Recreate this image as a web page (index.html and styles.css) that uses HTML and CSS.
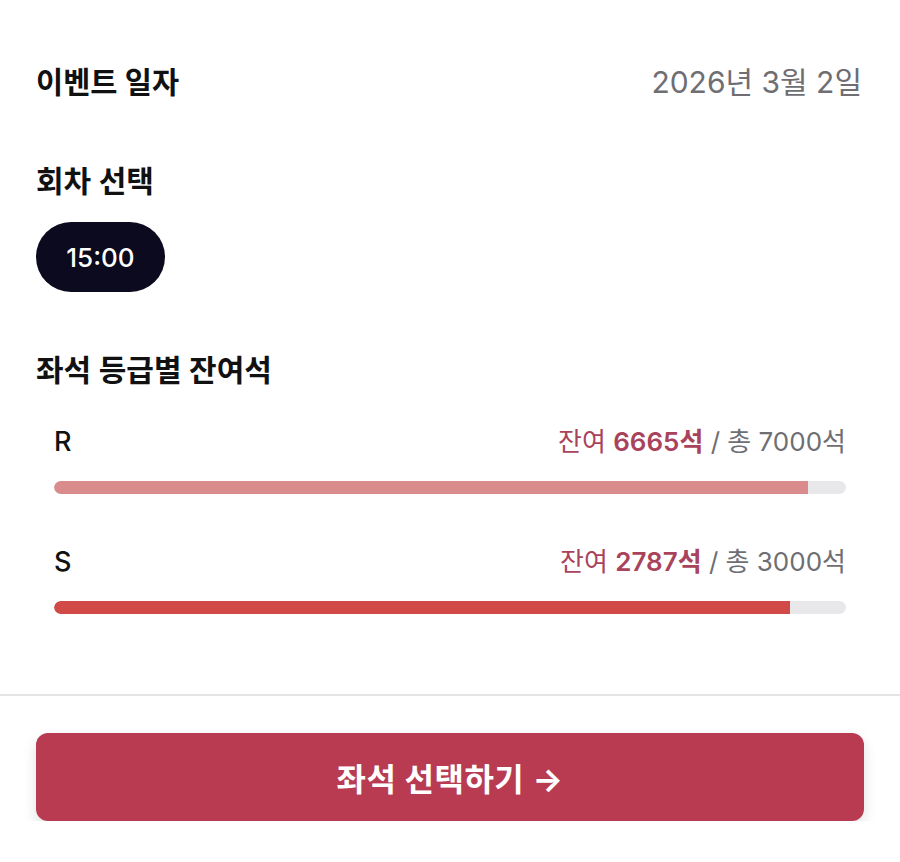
FILE: index.html
```html
<!DOCTYPE html>
<html lang="ko">
<head>
  <meta charset="UTF-8">
  <title>회차 선택</title>
  <link rel="stylesheet" href="styles.css">
</head>
<body>
  <div class="page">
    <div class="info-row">
      <span class="label">이벤트 일자</span>
      <span class="date">2026년 3월 2일</span>
    </div>

    <h3 class="section-title first">회차 선택</h3>
    <div class="rounds">
      <button class="round active">15:00</button>
    </div>

    <h3 class="section-title">좌석 등급별 잔여석</h3>
    <div class="grades">
      <div class="grade">
        <div class="grade-head">
          <span class="grade-name">R</span>
          <span class="grade-count"><span class="remain">잔여 <b>6665석</b></span> / 총 7000석</span>
        </div>
        <div class="bar"><div class="fill fill-r" style="width: 95.2%"></div></div>
      </div>
      <div class="grade">
        <div class="grade-head">
          <span class="grade-name">S</span>
          <span class="grade-count"><span class="remain">잔여 <b>2787석</b></span> / 총 3000석</span>
        </div>
        <div class="bar"><div class="fill fill-s" style="width: 92.9%"></div></div>
      </div>
    </div>
  </div>

  <div class="footer">
    <button class="cta">좌석 선택하기 <span class="arrow">→</span></button>
  </div>
</body>
</html>
```

FILE: styles.css
```css
body {
  margin: 0;
  background: #fff;
  color: #111;
  font-family: "Inter", "Noto Sans CJK KR", sans-serif;
}
.page {
  padding: 62px 36px 0;
  height: 694px;
  box-sizing: border-box;
}
.info-row {
  display: flex;
  justify-content: space-between;
  align-items: center;
  line-height: 40px;
}
.label {
  font-size: 29.5px;
  font-weight: 600;
}
.date {
  font-size: 30px;
  color: #6e6e73;
  margin-right: 2px;
}
.section-title {
  margin: 58px 0 0;
  font-size: 30px;
  font-weight: 600;
  line-height: 40px;
}
.section-title.first {
  margin-top: 59px;
}
.rounds {
  margin-top: 21px;
  display: flex;
  gap: 12px;
}
.round {
  height: 70px;
  width: 129px;
  border-radius: 35px;
  border: none;
  background: #0b0a1e;
  color: #fff;
  font-family: inherit;
  font-size: 26px;
  font-weight: 500;
}
.grades {
  padding: 34px 18px 0;
}
.grade + .grade {
  margin-top: 50px;
}
.grade-head {
  display: flex;
  justify-content: space-between;
  align-items: center;
  line-height: 36px;
}
.grade-name {
  font-size: 27px;
  font-weight: 500;
}
.grade-count {
  font-size: 26px;
  color: #6e6e73;
}
.remain {
  color: #a9435c;
}
.remain b {
  font-weight: 600;
}
.bar {
  margin-top: 21px;
  height: 13px;
  background: #e8e8ea;
  border-radius: 7px;
  overflow: hidden;
}
.fill {
  height: 100%;
  border-radius: 7px 0 0 7px;
}
.fill-r {
  background: #da8c8c;
}
.fill-s {
  background: #d24a48;
}
.footer {
  border-top: 2px solid #e4e4e6;
  padding: 37px 36px 0;
}
.cta {
  width: 100%;
  height: 88px;
  border: none;
  border-radius: 12px;
  background: #b93b52;
  color: #fff;
  font-family: inherit;
  font-size: 32px;
  font-weight: 700;
  letter-spacing: 0.5px;
  box-shadow: 0 6px 14px rgba(0, 0, 0, 0.12);
}
.arrow {
  font-size: 32px;
}
```
